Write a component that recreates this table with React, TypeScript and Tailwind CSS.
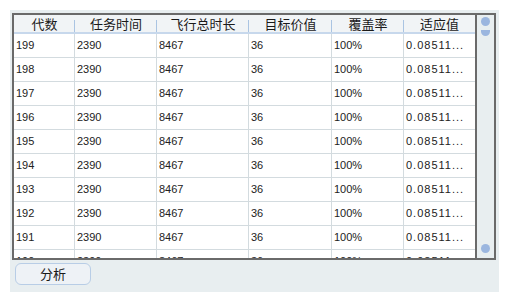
import React from 'react';

const cols = [
  { title: '代数', w: 'w-[61px]' },
  { title: '任务时间', w: 'w-[82px]' },
  { title: '飞行总时长', w: 'w-[92px]' },
  { title: '目标价值', w: 'w-[83px]' },
  { title: '覆盖率', w: 'w-[72px]' },
  { title: '适应值', w: 'flex-1' },
];

const rows = [199, 198, 197, 196, 195, 194, 193, 192, 191, 190].map((gen) => [
  String(gen),
  '2390',
  '8467',
  '36',
  '100%',
  '0.08511...',
]);

const App: React.FC = () => {
  return (
    <div
      className="w-[518px] h-[299px] bg-white p-[10px]"
      style={{ fontFamily: '"Liberation Sans", "Noto Sans CJK SC", sans-serif' }}
    >
      <div className="w-[489px] h-[282px] bg-[#e8eef0] pt-[3px] pl-[2px]">
        {/* Table frame */}
        <div className="flex w-[484px] h-[247px] border-2 border-[#6a6a6a] bg-white">
          <div className="flex-1 flex flex-col overflow-hidden">
            {/* Header */}
            <div className="flex h-[19px] shrink-0 bg-[#f1f4f6] border-b-2 border-[#c7d8ec]">
              {cols.map((c, i) => (
                <div
                  key={c.title}
                  className={`${c.w} relative flex items-center justify-center text-[13px] text-[#1a1a1a]`}
                  style={{ fontFamily: '"Noto Sans CJK SC", sans-serif' }}
                >
                  {c.title}
                  {i < cols.length - 1 && (
                    <span className="absolute right-0 top-[5px] h-[12px] w-px bg-[#aac4e2]" />
                  )}
                </div>
              ))}
            </div>
            {/* Body */}
            {rows.map((r, ri) => (
              <div key={ri} className="flex h-[24px] shrink-0 border-b border-[#d3dbdf]">
                {r.map((v, ci) => (
                  <div
                    key={ci}
                    className={`${cols[ci].w} flex items-center pl-[2px] text-[11px] text-[#222] ${ci < r.length - 1 ? 'border-r border-[#d3dbdf]' : ''} ${ci === 5 ? 'tracking-[1px]' : ''}`}
                  >
                    {v}
                  </div>
                ))}
              </div>
            ))}
          </div>
          {/* Scrollbar */}
          <div className="w-[19px] shrink-0 border-l-2 border-[#6a6a6a] bg-[#e8eef0] flex flex-col items-center justify-between py-[1px] overflow-hidden">
            <div className="flex flex-col items-center">
              <span className="mt-[1px] w-[9px] h-[9px] rounded-full bg-[#9bb6df]" />
              <span className="mt-[4px] w-[9px] h-[6px] rounded-b-full rounded-t-[3px] bg-[#9bb6df]" />
            </div>
            <span className="mb-[4px] w-[9px] h-[9px] rounded-full bg-[#9bb6df]" />
          </div>
        </div>
        {/* Button */}
        <button
          className="mt-[3px] ml-[3px] w-[76px] h-[22px] rounded-[6px] border border-[#b8cde6] bg-[#eef2f6] text-[13px] text-[#1a1a1a] flex items-center justify-center"
          style={{ fontFamily: '"Noto Sans CJK SC", sans-serif' }}
        >
          分析
        </button>
      </div>
    </div>
  );
};

export default App;
